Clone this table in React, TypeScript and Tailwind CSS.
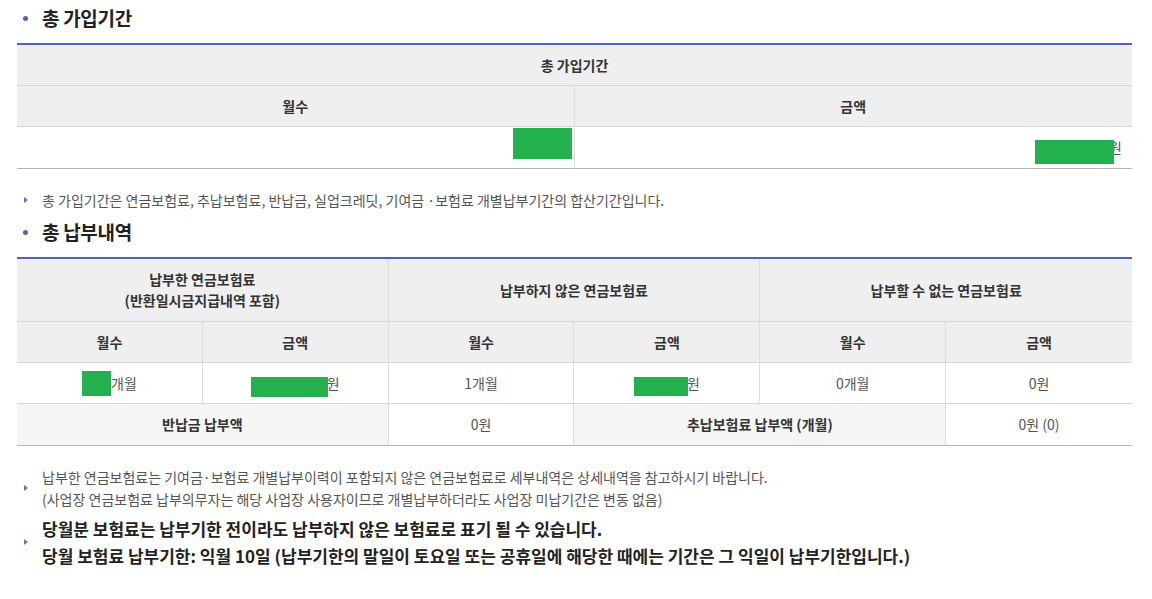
import React from "react";

function Title({ children }: { children: React.ReactNode }) {
  return (
    <div className="flex items-center h-[36px] pl-[23px]">
      <span className="block w-[5px] h-[5px] rounded-full bg-[#5063b5]" />
      <span className="ml-[14px] text-[19px] leading-[36px] font-bold text-[#222] tracking-[-0.3px]">
        {children}
      </span>
    </div>
  );
}

function Tri() {
  return (
    <span className="block w-0 h-0 border-y-[3px] border-y-transparent border-l-[4px] border-l-[#6074c4]" />
  );
}

const H = "flex items-center justify-center bg-[#efefef] text-[14px] font-bold text-[#333] border-b border-[#d6d6d6]";
const D = "flex items-center justify-center text-[14px] text-[#555] border-b border-[#d6d6d6]";
const L = "flex items-center justify-center bg-[#f5f5f5] text-[14px] font-bold text-[#333] border-b border-[#b4b4b4]";
const V = "flex items-center justify-center text-[14px] text-[#555] border-b border-[#b4b4b4]";
const R = " border-r border-r-[#dcdcdc]";

export default function App() {
  return (
    <div className="w-[1152px] h-[599px] bg-white font-['Noto_Sans_CJK_KR','Noto_Sans',sans-serif] overflow-hidden">
      <Title>총 가입기간</Title>
      <div className="ml-[17px] w-[1115px] mt-[7px] border-t-2 border-[#4e62b7]">
        <div className={H + " h-[41px]"}>총 가입기간</div>
        <div className="grid grid-cols-2">
          <div className={H + R + " h-[41px]"}>월수</div>
          <div className={H + " h-[41px]"}>금액</div>
          <div className={"flex justify-end items-start pr-[2px] pt-[1px] h-[42px] border-b border-[#b4b4b4]" + R}>
            <span className="block w-[59px] h-[31px] bg-[#22b14c]" />
          </div>
          <div className="flex justify-end items-center pr-[10px] h-[42px] border-b border-[#b4b4b4] text-[14px] text-[#555]">
            <span className="relative z-10 block w-[79px] h-[24px] bg-[#22b14c] mt-[8px] -mr-[5px]" />
            <span>원</span>
          </div>
        </div>
      </div>

      <div className="mt-[21px] flex items-center h-[20px] pl-[24px]">
        <Tri />
        <span className="ml-[14px] text-[14px] text-[#555] leading-[20px]">
          총 가입기간은 연금보험료, 추납보험료, 반납금, 실업크레딧, 기여금 ·보험료 개별납부기간의 합산기간입니다.
        </span>
      </div>

      <div className="mt-[4px]">
        <Title>총 납부내역</Title>
      </div>
      <div className="ml-[17px] w-[1115px] mt-[7px] border-t-2 border-[#4e62b7] grid grid-cols-6">
        <div className={H + R + " col-span-2 h-[63px] flex-col leading-[21px]"}>
          <span>납부한 연금보험료</span>
          <span>(반환일시금지급내역 포함)</span>
        </div>
        <div className={H + R + " col-span-2 h-[63px]"}>납부하지 않은 연금보험료</div>
        <div className={H + " col-span-2 h-[63px]"}>납부할 수 없는 연금보험료</div>

        <div className={H + R + " h-[41px]"}>월수</div>
        <div className={H + R + " h-[41px]"}>금액</div>
        <div className={H + R + " h-[41px]"}>월수</div>
        <div className={H + R + " h-[41px]"}>금액</div>
        <div className={H + R + " h-[41px]"}>월수</div>
        <div className={H + " h-[41px]"}>금액</div>

        <div className={D + R + " h-[41px]"}>
          <span className="block w-[29px] h-[25px] bg-[#22b14c] mt-[1px]" />
          <span>개월</span>
        </div>
        <div className={D + R + " h-[41px]"}>
          <span className="relative z-10 block w-[77px] h-[20px] bg-[#22b14c] mt-[8px] -mr-[1px]" />
          <span>원</span>
        </div>
        <div className={D + R + " h-[41px]"}>1개월</div>
        <div className={D + R + " h-[41px]"}>
          <span className="relative z-10 block w-[54px] h-[19px] bg-[#22b14c] mt-[7px] -mr-[1px]" />
          <span>원</span>
        </div>
        <div className={D + R + " h-[41px]"}>0개월</div>
        <div className={D + " h-[41px]"}>0원</div>

        <div className={L + R + " col-span-2 h-[42px]"}>반납금 납부액</div>
        <div className={V + R + " h-[42px]"}>0원</div>
        <div className={L + R + " col-span-2 h-[42px]"}>추납보험료 납부액 (개월)</div>
        <div className={V + " h-[42px]"}>0원 (0)</div>
      </div>

      <div className="mt-[20px] flex items-center pl-[24px]">
        <Tri />
        <div className="ml-[14px] text-[14px] text-[#555] leading-[22px]">
          <div>납부한 연금보험료는 기여금·보험료 개별납부이력이 포함되지 않은 연금보험료로 세부내역은 상세내역을 참고하시기 바랍니다.</div>
          <div>(사업장 연금보험료 납부의무자는 해당 사업장 사용자이므로 개별납부하더라도 사업장 미납기간은 변동 없음)</div>
        </div>
      </div>
      <div className="mt-[5px] flex items-center pl-[24px]">
        <Tri />
        <div className="ml-[14px] text-[17px] font-bold text-[#222] leading-[27px]">
          <div>당월분 보험료는 납부기한 전이라도 납부하지 않은 보험료로 표기 될 수 있습니다.</div>
          <div>당월 보험료 납부기한: 익월 10일 (납부기한의 말일이 토요일 또는 공휴일에 해당한 때에는 기간은 그 익일이 납부기한입니다.)</div>
        </div>
      </div>
    </div>
  );
}
